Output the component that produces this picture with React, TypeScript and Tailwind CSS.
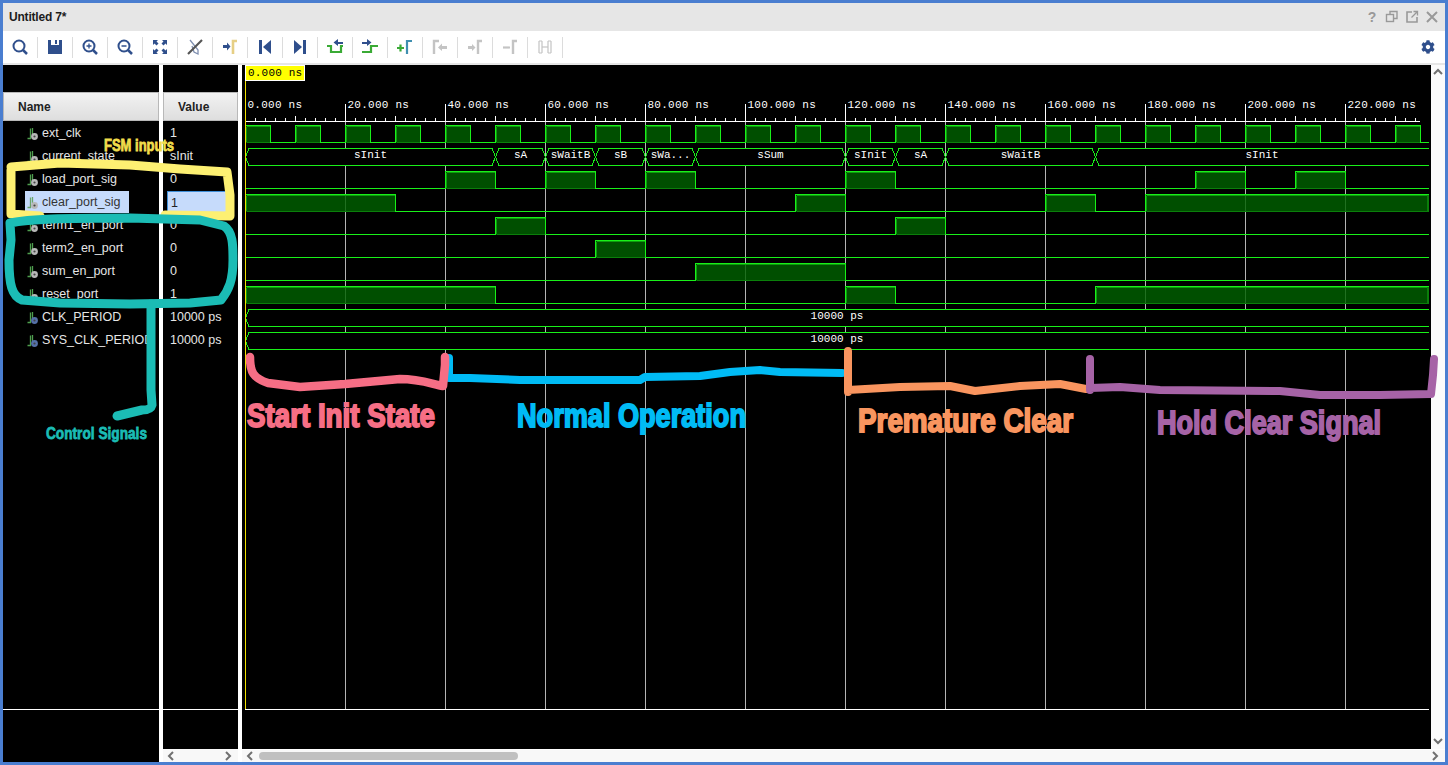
import { FaCog } from "react-icons/fa";

const SANS = "font-['Liberation_Sans',Arial,sans-serif]";
const GREEN = "#19f019";

const rows = [
  { name: "ext_clk", value: "1" },
  { name: "current_state", value: "sInit" },
  { name: "load_port_sig", value: "0" },
  { name: "clear_port_sig", value: "1", selected: true },
  { name: "term1_en_port", value: "0" },
  { name: "term2_en_port", value: "0" },
  { name: "sum_en_port", value: "0" },
  { name: "reset_port", value: "1" },
  { name: "CLK_PERIOD", value: "10000 ps", param: true },
  { name: "SYS_CLK_PERIOD", value: "10000 ps", param: true },
];

// [row index, list of high intervals in page px]
const clkHigh: [number, number][] = Array.from({ length: 24 }, (_, i) => [245.5 + 50 * i, 270.5 + 50 * i]);
const bits: { row: number; high: [number, number][] }[] = [
  { row: 0, high: clkHigh },
  { row: 2, high: [[445.5, 495.5], [545.5, 595.5], [645.5, 695.5], [845.5, 895.5], [1195.5, 1245.5], [1295.5, 1345.5]] },
  { row: 3, high: [[245.5, 395.5], [795.5, 845.5], [1045.5, 1095.5], [1145.5, 1428]] },
  { row: 4, high: [[495.5, 545.5], [895.5, 945.5]] },
  { row: 5, high: [[595.5, 645.5]] },
  { row: 6, high: [[695.5, 845.5]] },
  { row: 7, high: [[245.5, 495.5], [845.5, 895.5], [1095.5, 1428]] },
];

const busSegments: [number, number, string][] = [
  [245.5, 495.5, "sInit"],
  [495.5, 545.5, "sA"],
  [545.5, 595.5, "sWaitB"],
  [595.5, 645.5, "sB"],
  [645.5, 695.5, "sWa..."],
  [695.5, 845.5, "sSum"],
  [845.5, 895.5, "sInit"],
  [895.5, 945.5, "sA"],
  [945.5, 1095.5, "sWaitB"],
];

const ruler = ["0.000", "20.000", "40.000", "60.000", "80.000", "100.000", "120.000", "140.000", "160.000", "180.000", "200.000", "220.000"];

function Bit({ row, high }: { row: number; high: [number, number][] }) {
  const low = 142.5 + 23 * row;
  const top = 125.5 + 23 * row;
  let line = `M245.5 ${low}`;
  for (const [a, b] of high) {
    const open = b === 1428;
    line += ` L${a} ${low} L${a} ${top} L${open ? 1429 : b} ${top}`;
    if (!open) line += ` L${b} ${low}`;
  }
  if (high[high.length - 1][1] !== 1428) line += ` L1429 ${low}`;
  return (
    <g>
      {high.map(([a, b]) => (
        <g key={a}>
          <rect x={a} y={top} width={b - a} height={low - top} fill="#006000" fillOpacity={0.82} />
          <path d={`M${a + 1} ${low - 0.5} H${b}`} stroke="#0a7f0a" strokeWidth={1} />
          <path d={`M${a + 1} ${top + 1} H${b - 1} M${a + 1} ${top + 1} V${low - 1}`} stroke="#0c9c0c" strokeWidth={1} />
          {b === 1428 && <path d={`M${b} ${top} V${low}`} stroke="#0a7f0a" strokeWidth={1.5} />}
        </g>
      ))}
      <path d={line} fill="none" stroke={GREEN} strokeWidth={1.3} />
    </g>
  );
}

function BusShape({ a, b, top, open }: { a: number; b: number; top: number; open?: boolean }) {
  const bot = top + 17;
  const mid = top + 8.5;
  const d = open
    ? `M1429 ${top} H${a + 3.5} L${a} ${mid} L${a + 3.5} ${bot} H1429`
    : `M${a} ${mid} L${a + 3.5} ${top} H${b - 3.5} L${b} ${mid} L${b - 3.5} ${bot} H${a + 3.5} Z`;
  return <path d={d} fill="#000" stroke={GREEN} strokeWidth={1} />;
}

function WaveText({ x, y, children }: { x: number; y: number; children: string }) {
  return (
    <text x={x} y={y} fill="#fff" fontSize={11} textAnchor="middle" className="font-['Liberation_Mono',monospace]">
      {children}
    </text>
  );
}

function Waveform() {
  const minor: number[] = [];
  for (let x = 245.5; x < 1425; x += 10) minor.push(x);
  const grid = Array.from({ length: 11 }, (_, i) => 345.5 + 100 * i);
  return (
    <svg viewBox="242 65 1189 684" className="block h-full w-full" shapeRendering="crispEdges">
      {grid.map((x) => (
        <path key={x} d={`M${x} 121 V709`} stroke="#b4b4b4" strokeWidth={1} />
      ))}
      <path d="M245 121.5 H1420" stroke="#fff" strokeWidth={1} />
      {minor.map((x, i) => (
        <path key={x} d={`M${x} ${i % 10 === 0 ? 104 : i % 5 === 0 ? 116 : 118} V121`} stroke="#fff" strokeWidth={1} />
      ))}
      {ruler.map((t, i) => (
        <text key={t} x={247.5 + 100 * i} y={108} fill="#fff" fontSize={11} letterSpacing={0.25} className="font-['Liberation_Mono',monospace]">
          {t} ns
        </text>
      ))}
      {bits.map((b) => (
        <Bit key={b.row} row={b.row} high={b.high} />
      ))}
      {busSegments.map(([a, b]) => (
        <BusShape key={a} a={a} b={b} top={148.5} />
      ))}
      <BusShape a={1095.5} b={1429} top={148.5} open />
      {busSegments.map(([a, b, label]) => (
        <WaveText key={a} x={(a + b) / 2} y={158}>
          {label}
        </WaveText>
      ))}
      <WaveText x={1262} y={158}>sInit</WaveText>
      <BusShape a={245.5} b={1429} top={309.5} open />
      <BusShape a={245.5} b={1429} top={332.5} open />
      <WaveText x={837} y={319}>10000 ps</WaveText>
      <WaveText x={837} y={342}>10000 ps</WaveText>
      <path d="M245 709.5 H1429" stroke="#fff" strokeWidth={1} />
      <path d="M245.5 80 V709" stroke="#f0e000" strokeWidth={1} />
    </svg>
  );
}

function SignalIcon({ param, selected }: { param?: boolean; selected?: boolean }) {
  return (
    <svg width="12" height="14" viewBox="0 0 12 14" className="shrink-0">
      <path d="M0.5 11.5 H3.5 V1.5 M5.5 1 V7" fill="none" stroke={selected ? "#6aa56a" : "#4f9f4f"} strokeWidth={1.3} />
      <circle cx="7.5" cy="9.5" r="3.4" fill={param ? "#5570a8" : "#b8b8b8"} />
      <circle cx="7.5" cy="9.5" r="1.1" fill="#444" />
    </svg>
  );
}

function NameColumn() {
  return (
    <div className={`relative w-[156px] shrink-0 bg-black ${SANS}`}>
      <div className="h-[27px]" />
      <div className="flex h-[29px] items-center border border-[#b8b8b8] bg-gradient-to-b from-[#f2f2f2] to-[#dedede] pl-[14px] text-[12px] font-bold text-[#222]">
        Name
      </div>
      {rows.map((r) => (
        <div key={r.name} className="flex h-[23px] items-center">
          <div
            className={`ml-[22px] flex h-[22px] items-center gap-[3px] whitespace-nowrap pl-[2px] pt-[2px] text-[12.5px] ${
              r.selected ? "w-[104px] bg-[#c6dbfb] text-[#333]" : "text-[#e6e6e6]"
            }`}
          >
            <SignalIcon param={r.param} selected={r.selected} />
            {r.name}
          </div>
        </div>
      ))}
      <div className="absolute inset-x-0 top-[644px] h-px bg-white" />
    </div>
  );
}

function ValueColumn() {
  return (
    <div className={`ml-[4px] flex w-[75px] shrink-0 flex-col ${SANS}`}>
      <div className="relative flex-1 bg-black">
        <div className="h-[27px]" />
        <div className="flex h-[29px] items-center border border-[#b8b8b8] bg-gradient-to-b from-[#f2f2f2] to-[#dedede] pl-[14px] text-[12px] font-bold text-[#222]">
          Value
        </div>
        {rows.map((r) => (
          <div key={r.name} className="flex h-[23px] items-center">
            <div
              className={`ml-[4px] flex h-[22px] w-[59px] items-center whitespace-nowrap pl-[3px] pt-[2px] text-[12.5px] ${
                r.selected ? "border-l border-t border-[#3f8fd8] bg-[#c6dbfb] text-[#222]" : "text-[#e6e6e6]"
              }`}
            >
              {r.value}
            </div>
          </div>
        ))}
        <div className="absolute inset-x-0 top-[644px] h-px bg-white" />
      </div>
      <div className="flex h-[13px] items-center justify-between bg-[#f8f8f8] px-[4px]">
        <Chevron dir="left" />
        <Chevron dir="right" />
      </div>
    </div>
  );
}

function Chevron({ dir }: { dir: "left" | "right" | "up" | "down" }) {
  const paths = {
    left: "M6 1 L2 5 L6 9",
    right: "M2 1 L6 5 L2 9",
    up: "M1 6 L5 2 L9 6",
    down: "M1 3 L5 7 L9 3",
  };
  return (
    <svg width="10" height="10" viewBox="0 0 10 10" className="shrink-0">
      <path d={paths[dir]} fill="none" stroke="#707070" strokeWidth={2} />
    </svg>
  );
}

// toolbar glyphs, 20x20 box
const BLUE = "#2f4f8c";
const GOLD = "#e6cf85";
const TGREEN = "#3aaa35";
const TEAL = "#3f8fb0";
const GRAY = "#c4c4c4";

const tools = [
  <g key="s" fill="none" stroke={BLUE} strokeWidth={2}>
    <circle cx="9" cy="9" r="5.5" />
    <path d="M13 13 L17 17" strokeWidth={2.5} />
  </g>,
  <path key="sv" fill={BLUE} fillRule="evenodd" d="M3 3 H17 V17 H3 Z M6 3 V8 H14 V3 H12 V7 H10 V3 Z" />,
  <g key="zi" fill="none" stroke={BLUE} strokeWidth={2}>
    <circle cx="9" cy="9" r="5.5" />
    <path d="M13 13 L17 17" strokeWidth={2.5} />
    <path d="M6.5 9 H11.5 M9 6.5 V11.5" strokeWidth={1.3} />
  </g>,
  <g key="zo" fill="none" stroke={BLUE} strokeWidth={2}>
    <circle cx="9" cy="9" r="5.5" />
    <path d="M13 13 L17 17" strokeWidth={2.5} />
    <path d="M6.5 9 H11.5" strokeWidth={1.5} />
  </g>,
  <g key="f" fill={BLUE}>
    <path d="M3 3 H8 L6.5 4.5 L8.5 6.5 L6.5 8.5 L4.5 6.5 L3 8 Z" />
    <path d="M17 3 H12 L13.5 4.5 L11.5 6.5 L13.5 8.5 L15.5 6.5 L17 8 Z" />
    <path d="M3 17 H8 L6.5 15.5 L8.5 13.5 L6.5 11.5 L4.5 13.5 L3 12 Z" />
    <path d="M17 17 H12 L13.5 15.5 L11.5 13.5 L13.5 11.5 L15.5 13.5 L17 12 Z" />
  </g>,
  <g key="x" fill="none">
    <path d="M5 3 L13 13 L13 17 L9 15 L7 9" stroke="#7f8fb0" strokeWidth={1.3} />
    <path d="M3 17 L17 3" stroke="#555" strokeWidth={2.2} />
  </g>,
  <g key="c">
    <path d="M3 8 H7 V5.5 L10.5 9.5 L7 13.5 V11 H3 Z" fill={BLUE} />
    <path d="M13 17 V4 H17" fill="none" stroke={GOLD} strokeWidth={2.6} />
  </g>,
  <g key="p" fill={BLUE}>
    <rect x="4" y="3" width="3" height="14" />
    <path d="M16 3 V17 L8 10 Z" />
  </g>,
  <g key="n" fill={BLUE}>
    <rect x="13" y="3" width="3" height="14" />
    <path d="M4 3 V17 L12 10 Z" />
  </g>,
  <g key="pe">
    <path d="M2 9 H6 V15 H16 V9 H18" fill="none" stroke={TGREEN} strokeWidth={2.2} />
    <path d="M18 5 H13 V2 L8.5 5.5 L13 9 V7 H18 Z" fill={BLUE} />
  </g>,
  <g key="ne">
    <path d="M2 15 H11 V9 H18" fill="none" stroke={TGREEN} strokeWidth={2.2} />
    <path d="M2 5 H7 V2 L11.5 5.5 L7 9 V7 H2 Z" fill={BLUE} />
  </g>,
  <g key="add">
    <path d="M2 11 H9 M5.5 7.5 V14.5" stroke={TGREEN} strokeWidth={2.2} />
    <path d="M12 17 V4 H17" fill="none" stroke={TEAL} strokeWidth={2.2} />
  </g>,
  <g key="d1">
    <path d="M4 17 V4 H9" fill="none" stroke={GRAY} strokeWidth={2.4} />
    <path d="M17 9 H12 V6.5 L8 10.5 L12 14 V12 H17 Z" fill={GRAY} />
  </g>,
  <g key="d2">
    <path d="M3 9 H7 V7 L10.5 10.5 L7 14 V12 H3 Z" fill={GRAY} />
    <path d="M13 17 V4 H17" fill="none" stroke={GRAY} strokeWidth={2.4} />
  </g>,
  <g key="d3">
    <path d="M3 10.5 H10" stroke={GRAY} strokeWidth={2.2} />
    <path d="M13 17 V4 H17" fill="none" stroke={GRAY} strokeWidth={2.4} />
  </g>,
  <g key="d4" fill="none" stroke={GRAY}>
    <path d="M4 4 V16 M7 4 H4 M7 16 H4 M7 4 V16 M13 4 V16 M16 4 V16 M13 4 H16 M13 16 H16" strokeWidth={1.2} />
    <path d="M7 10 H13" strokeWidth={1.2} />
  </g>,
];

function Toolbar() {
  return (
    <div className="flex h-[32px] items-center bg-white">
      {tools.map((glyph, i) => (
        <div key={i} className="flex h-[21px] w-[35px] items-center justify-center border-r border-[#dcdcdc]">
          <svg width="20" height="20" viewBox="0 0 20 20">
            {glyph}
          </svg>
        </div>
      ))}
      <div className="flex-1" />
      <FaCog className="mr-[10px] text-[14px] text-[#2f4f8c]" />
    </div>
  );
}

function TitleBar() {
  return (
    <div className={`flex h-[28px] items-center bg-[#e6e6e6] pl-[6px] pr-[6px] ${SANS}`}>
      <span className="text-[12px] font-bold tracking-[-0.2px] text-[#1c1c1c]">Untitled 7*</span>
      <div className="flex-1" />
      <div className="flex items-center gap-[6px]">
        <span className="w-[14px] text-center text-[14px] font-bold leading-none text-[#999]">?</span>
        <svg width="14" height="14" viewBox="0 0 14 14" fill="none" stroke="#999" strokeWidth={1.4}>
          <rect x="1.5" y="4.5" width="7" height="7" />
          <path d="M5 4 V1.5 H12 V8.5 H9" />
        </svg>
        <svg width="14" height="14" viewBox="0 0 14 14" fill="none" stroke="#999" strokeWidth={1.6}>
          <path d="M7 2 H2 V12 H12 V7" />
          <path d="M6.5 7.5 L12 2 M8.5 1.5 H12.5 V5.5" strokeWidth={1.3} />
        </svg>
        <svg width="14" height="14" viewBox="0 0 14 14" fill="none" stroke="#999" strokeWidth={2}>
          <path d="M2 2 L12 12 M12 2 L2 12" />
        </svg>
      </div>
    </div>
  );
}

function Scribble({ x, y, w, size, color, children }: { x: number; y: number; w: number; size: number; color: string; children: string }) {
  return (
    <text
      x={x}
      y={y}
      textLength={w}
      lengthAdjust="spacingAndGlyphs"
      fontSize={size}
      fontWeight={700}
      fill={color}
      stroke={color}
      strokeWidth={size > 20 ? 1.9 : 0.8}
      className="font-['Liberation_Sans',Arial,sans-serif]"
    >
      {children}
    </text>
  );
}

// hand drawn marker strokes and captions sitting on top of the window
function Annotations() {
  return (
    <svg viewBox="0 0 1448 765" className="pointer-events-none absolute -left-[3px] -top-[3px] h-[765px] w-[1448px]">
      <g fill="none" strokeLinecap="round" strokeLinejoin="round">
        <path d="M11 170 L11 214 L40 216 M11 167 L60 163 L130 165 L180 169 L227 172 L230 195 L230 216 L165 215" stroke="#fdf072" strokeWidth={9} />
        <path d="M10 223 C30 219 60 218 130 218 L200 220 L224 226 C233 232 233 245 233 260 C233 280 229 290 221 300 L190 303 L130 304 L60 303 L22 300 C12 296 9 285 9 260 L11 240 Z" stroke="#1bbcb5" strokeWidth={9} />
        <path d="M151 304 V390 L152 405 C151 409 148 410 142 410 L117 416" stroke="#1bbcb5" strokeWidth={9} />
        <path d="M449 358 V378 L470 378 L520 380 L640 380 L645 377 L700 376 L730 372 L760 370 L780 372 L842 373" stroke="#00bbf5" strokeWidth={8} />
        <path d="M250 357 C250 372 253 378 268 383 L300 387 L345 384 L400 379 C420 379 432 384 443 386 L445 365 L445 357" stroke="#f66e85" strokeWidth={8.5} />
        <path d="M848 351 V392 M848 390 L900 387 L950 386 L975 391 L1020 386 L1060 384 L1086 389" stroke="#f9955f" strokeWidth={8} />
        <path d="M1090 359 L1090 390 M1090 388 L1120 387 L1160 390 L1280 391 L1320 395 L1380 395 L1431 394 L1433 375 L1434 359" stroke="#a663a6" strokeWidth={8} />
      </g>
      <Scribble x={247} y={427} w={188} size={33} color="#f66e85">Start Init State</Scribble>
      <Scribble x={517} y={427} w={229} size={33} color="#00bbf5">Normal Operation</Scribble>
      <Scribble x={858} y={432} w={215} size={33} color="#f9955f">Premature Clear</Scribble>
      <Scribble x={1157} y={434} w={224} size={33} color="#a663a6">Hold Clear Signal</Scribble>
      <Scribble x={46} y={439} w={101} size={17} color="#1bbcb5">Control Signals</Scribble>
      <Scribble x={104} y={151} w={70} size={16} color="#f1de4c">FSM inputs</Scribble>
    </svg>
  );
}

export default function App() {
  return (
    <div className="relative flex h-[765px] w-[1448px] flex-col overflow-hidden border-[3px] border-[#4a7ed0] bg-white">
      <TitleBar />
      <Toolbar />
      <div className="h-[2px] bg-[#e6e6e6]" />
      <div className="flex min-h-0 flex-1">
        <NameColumn />
        <ValueColumn />
        <div className="ml-[4px] flex flex-1 flex-col">
          <div className="flex h-[684px]">
            <div className="relative w-[1189px] shrink-0 bg-black">
              <Waveform />
              <div className="absolute left-[3px] top-0 border border-white bg-[#ffff00] px-[2px] font-['Liberation_Mono',monospace] text-[11px] leading-[14px] tracking-[0.2px] text-black">
                0.000 ns
              </div>
            </div>
            <div className="flex flex-1 flex-col items-center justify-between bg-[#fbfbfb] py-[3px]">
              <Chevron dir="up" />
              <Chevron dir="down" />
            </div>
          </div>
          <div className="mt-[1px] flex flex-1 items-center bg-[#f8f8f8] px-[4px]">
            <Chevron dir="left" />
            <div className="ml-[3px] h-[8px] w-[259px] rounded-full bg-[#c0c0c0]" />
            <div className="flex-1" />
            <Chevron dir="right" />
          </div>
        </div>
      </div>
      <Annotations />
    </div>
  );
}
